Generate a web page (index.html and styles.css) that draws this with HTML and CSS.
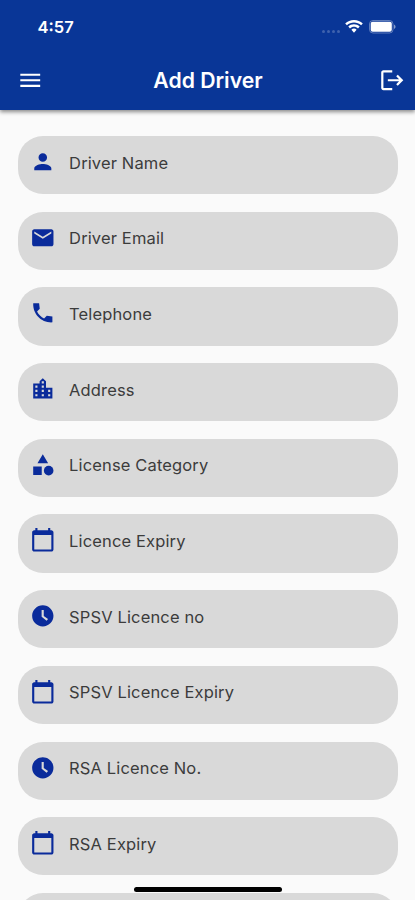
FILE: index.html
```html
<!DOCTYPE html>
<html lang="en">
<head>
<meta charset="utf-8">
<meta name="viewport" content="width=device-width, initial-scale=1">
<title>Add Driver</title>
<link rel="stylesheet" href="styles.css">
</head>
<body>
<svg class="defs" aria-hidden="true">
  <symbol id="calendar" viewBox="0 0 24 24"><path d="M20 3h-1V1h-2v2H7V1H5v2H4c-1.100 0-2 .9-2 2v16c0 1.100.9 2 2 2h16c1.100 0 2-.9 2-2V5c0-1.100-.9-2-2-2zm0 18H4V7.500h16V21z"/></symbol>
  <symbol id="clock" viewBox="0 0 24 24"><path d="M12 2C6.500 2 2 6.500 2 12s4.500 10 10 10 10-4.500 10-10S17.500 2 12 2zm3.600 14.600L10.900 13V6.600h2v5.500l4 3-1.300 1.500z"/></symbol>
</svg>
<div class="screen">
  <header class="header">
    <div class="status">
      <span class="time">4:57</span>
      <div class="indicators">
        <span class="dots"><i></i><i></i><i></i><i></i></span>
        <svg class="wifi" viewBox="0 0 18 14"><path d="M9 0C5.600 0 2.500 1.300.2 3.500l1.700 1.800C3.800 3.500 6.300 2.500 9 2.500s5.200 1 7.100 2.800l1.700-1.800C15.500 1.300 12.400 0 9 0zM9 4.300c-2.200 0-4.200.8-5.700 2.300L5 8.400c1.100-1 2.500-1.600 4-1.600s2.900.6 4 1.600l1.700-1.800C13.200 5.100 11.200 4.300 9 4.300zM9 8.600c-1 0-1.900.4-2.600 1.100L9 12.800l2.600-3.100C10.900 9 10 8.600 9 8.600z"/></svg>
        <svg class="battery" viewBox="0 0 27 14"><rect x=".5" y=".5" width="23.500" height="12.500" rx="3.500" fill="none" stroke="#fff" stroke-opacity=".35"/><rect x="1.700" y="1.700" width="21.100" height="10.100" rx="2"/><path d="M25 4.500c2 .8 2 3.700 0 4.500z" fill-opacity=".5"/></svg>
      </div>
    </div>
    <div class="bar">
      <svg class="bar-icon" viewBox="0 0 24 24"><path d="M3 18h18v-2H3v2zm0-5h18v-2H3v2zm0-7v2h18V6H3z"/></svg>
      <h1 class="title">Add Driver</h1>
      <svg class="bar-icon" viewBox="0 0 24 24"><path d="M17 7l-1.410 1.410L18.170 11H8v2h10.170l-2.580 2.580L17 17l5-5zM4 5h8V3H4c-1.100 0-2 .9-2 2v14c0 1.100.9 2 2 2h8v-2H4V5z"/></svg>
    </div>
  </header>
  <main class="form">
    <div class="field"><svg class="icon" viewBox="0 0 24 24"><path d="M12 12c2.210 0 4-1.790 4-4s-1.790-4-4-4-4 1.790-4 4 1.790 4 4 4zm0 2c-2.670 0-8 1.340-8 4v2h16v-2c0-2.660-5.330-4-8-4z"/></svg><span>Driver Name</span></div>
    <div class="field"><svg class="icon" viewBox="0 0 24 24"><path d="M20 4H4c-1.100 0-1.990.9-1.990 2L2 18c0 1.100.9 2 2 2h16c1.100 0 2-.9 2-2V6c0-1.100-.9-2-2-2zm0 4l-8 5-8-5V6l8 5 8-5v2z"/></svg><span>Driver Email</span></div>
    <div class="field"><svg class="icon" viewBox="0 0 24 24"><path d="M21 15.460l-5.270-.61-2.520 2.520c-2.830-1.440-5.150-3.750-6.590-6.590l2.530-2.530L8.540 3H3.030C2.450 13.180 10.820 21.550 21 20.970v-5.510z"/></svg><span>Telephone</span></div>
    <div class="field"><svg class="icon" viewBox="0 0 24 24"><path d="M15 11V5l-3-3-3 3v2H3v14h18V11h-6zm-8 8H5v-2h2v2zm0-4H5v-2h2v2zm0-4H5V9h2v2zm6 8h-2v-2h2v2zm0-4h-2v-2h2v2zm0-4h-2V9h2v2zm0-4h-2V5h2v2zm6 12h-2v-2h2v2zm0-4h-2v-2h2v2z"/></svg><span>Address</span></div>
    <div class="field"><svg class="icon" viewBox="0 0 24 24"><path d="M12 2l-5 8.500h10zM3 13.500h8v8H3z"/><circle cx="17.500" cy="17.500" r="4.500"/></svg><span>License Category</span></div>
    <div class="field"><svg class="icon"><use href="#calendar"/></svg><span>Licence Expiry</span></div>
    <div class="field"><svg class="icon"><use href="#clock"/></svg><span>SPSV Licence no</span></div>
    <div class="field"><svg class="icon"><use href="#calendar"/></svg><span>SPSV Licence Expiry</span></div>
    <div class="field"><svg class="icon"><use href="#clock"/></svg><span>RSA Licence No.</span></div>
    <div class="field"><svg class="icon"><use href="#calendar"/></svg><span>RSA Expiry</span></div>
    <div class="field"></div>
  </main>
  <div class="home-indicator"></div>
</div>
</body>
</html>
```
FILE: styles.css
```css
* { box-sizing: border-box; }
body { margin: 0; background: #fafafa; font-family: Inter, "Liberation Sans", sans-serif; }
.defs { display: none; }
.screen { position: relative; height: 900px; overflow: hidden; }
.header {
  height: 109.500px;
  background: #093697;
  color: #fff;
  fill: #fff;
  box-shadow: 0 2px 4px rgba(0, 0, 0, .45);
}
.status { display: flex; justify-content: space-between; height: 54px; padding: 0 19px 0 37.500px; align-items: center; }
.time { font-size: 16.500px; font-weight: 600; }
.indicators { display: flex; align-items: center; }
.dots { display: flex; gap: 2px; margin: 9px 5px 0 0; }
.dots i { width: 3px; height: 3px; border-radius: 50%; background: rgba(255, 255, 255, .22); }
.wifi { width: 18px; height: 14px; margin-right: 6px; }
.battery { width: 27px; height: 14px; }
.bar { display: grid; grid-template-columns: 26.500px 1fr 26.500px; align-items: center; height: 53px; padding: 0 10px 0 17px; }
.bar-icon { width: 26.500px; height: 26.500px; }
.title { margin: 0 0 1px; padding-right: 6px; font-size: 21.200px; font-weight: 580; line-height: 28px; text-align: center; }
.form { display: flex; flex-direction: column; gap: 17.400px; padding: 26.500px 17px 0 17.500px; }
.field {
  display: flex;
  flex: none;
  gap: 13.700px;
  height: 58.300px;
  padding: 12.500px 12.300px 0;
  border-radius: 25px;
  background: #d9d9d9;
  color: #3c3c3c;
  font-size: 16.500px;
  line-height: 29px;
  letter-spacing: .14px;
}
.icon { width: 25.600px; height: 25.600px; margin-top: .5px; fill: #0a2b9b; }
.home-indicator { position: absolute; left: 134px; top: 886.500px; width: 148px; height: 5px; border-radius: 3px; background: #000; }
```
